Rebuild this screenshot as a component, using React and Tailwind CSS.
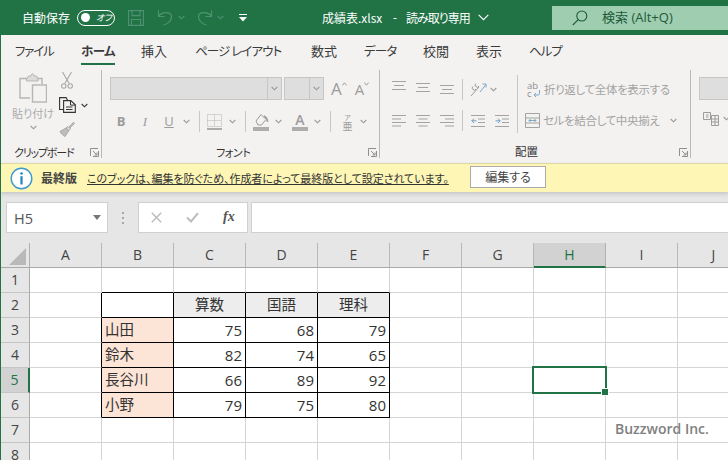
import React from "react";

const Chev = ({ className = "ml-0", color = "#9a9a9a" }) => (
  <svg width="7" height="5" viewBox="0 0 7 5" className={"shrink-0 " + className}>
    <path d="M.7 1 3.5 3.8 6.3 1" fill="none" stroke={color} strokeWidth="1.1" />
  </svg>
);

const Sep = ({ className }) => <div className={"w-px h-[21px] bg-[#c9c7c5] shrink-0 " + className} />;

const Launcher = () => (
  <svg width="9" height="9" viewBox="0 0 9 9" className="shrink-0">
    <path d="M.5 8V.5H8M8.5 3v5.5H3" fill="none" stroke="#8f8f8f" />
    <path d="M3 3 7 7M4.5 7H7V4.5" fill="none" stroke="#8f8f8f" />
  </svg>
);

const VAlign = ({ y, className }) => (
  <svg width="14" height="20" viewBox="0 0 14 20" className={"shrink-0 " + className}>
    {[0, 4, 8].map((d, i) => (
      <path key={i} d={`M${i === 1 ? 2 : 0} ${y + d + 0.5}H${i === 1 ? 12 : 14}`} stroke="#a3a3a3" fill="none" />
    ))}
  </svg>
);

const HAlign = ({ mode, className }) => {
  const rows = [14, 9, 14, 9];
  return (
    <svg width="14" height="14" viewBox="0 0 14 14" className={"shrink-0 " + className}>
      {rows.map((w, i) => {
        const x = mode === "l" ? 0 : mode === "c" ? (14 - w) / 2 : 14 - w;
        return <path key={i} d={`M${x} ${1.5 + i * 3.5}h${w}`} stroke="#a3a3a3" fill="none" />;
      })}
    </svg>
  );
};

const Indent = ({ dir, className }) => (
  <svg width="14" height="14" viewBox="0 0 14 14" className={"shrink-0 " + className}>
    <path d="M0 1.5h14M7 5h7M7 8.5h7M0 12.5h14" stroke="#a3a3a3" fill="none" />
    <path d={dir === "l" ? "M5.5 6.8H.8M3 4.6.8 6.8 3 9" : "M.5 6.8h4.7M3 4.6l2.2 2.2L3 9"} stroke="#6f9fc0" fill="none" />
  </svg>
);

const Paste = () => (
  <svg width="28" height="30" viewBox="0 0 28 30" fill="none">
    <path d="M1 5.5h7M18 5.5h5V11M1 5v20h10" stroke="#b5b5b5" strokeWidth="1.4" />
    <path d="M8 5.5 9.5 3h2.5c.3-3 2.7-3 3 0h2.5L19 6v2H7.5V6Z" fill="#dcdcdc" stroke="#b5b5b5" />
    <rect x="13.5" y="12" width="14" height="17" fill="#f3f2f1" stroke="#b5b5b5" strokeWidth="1.4" />
  </svg>
);

const Scissors = () => (
  <svg width="12" height="17" viewBox="0 0 12 17" fill="none" stroke="#a8a8a8" strokeWidth="1.1">
    <path d="M1.5 0 8.2 11.5M10.5 0 3.8 11.5" />
    <circle cx="2.8" cy="14" r="2.2" />
    <circle cx="9.2" cy="14" r="2.2" />
  </svg>
);

const Copy = () => (
  <svg width="17" height="16" viewBox="0 0 17 16" fill="none" stroke="#333" strokeWidth="1.1">
    <path d="M4 12.5H.6V.6h6.5L8.5 3" />
    <path d="M4.6 3.6h7.2l4.5 4.2v7.6H4.6Z" fill="#f3f2f1" />
    <path d="M11.5 3.6v4.5h4.8M7 10h6.5M7 12.5h6.5" strokeWidth="1" />
  </svg>
);

const Brush = () => (
  <svg width="16" height="16" viewBox="0 0 16 16" fill="none">
    <path d="M9 7 14.5 1.2l1 1L10 8" fill="#c4c4c4" stroke="#a8a8a8" />
    <path d="M9 5.5 11.5 8l-1.7 1.7L7 7Z" fill="#dcdcdc" stroke="#a8a8a8" />
    <path d="M7 7 1 10.5c1 2 3 4 5 5l3.8-5.8Z" fill="#bdbdbd" stroke="#a8a8a8" />
  </svg>
);

const Cell = ({ className = "", children }) => (
  <div
    className={
      "h-[25px] border-r border-b flex items-center text-[14.5px] leading-none px-[3px] " +
      className
    }
  >
    {children}
  </div>
);

const COLS = ["A", "B", "C", "D", "E", "F", "G", "H", "I", "J"];
const DATA = {
  2: ["", "算数", "国語", "理科"],
  3: ["山田", "75", "68", "79"],
  4: ["鈴木", "82", "74", "65"],
  5: ["長谷川", "66", "89", "92"],
  6: ["小野", "79", "75", "80"],
};

const black = "border-r-black border-b-black";

function SheetCell({ r, c }) {
  const t = DATA[r];
  const inTable = t && c >= 1 && c <= 4;
  if (inTable) {
    const v = t[c - 1];
    let cls = black + " text-[#333] [font-feature-settings:normal] ";
    if (r === 2) {
      cls += c === 1 ? "bg-white" : "bg-[#ededed] justify-center";
    } else if (c === 1) {
      cls += "bg-[#fce4d6]";
    } else {
      cls += "bg-white justify-end text-[15px]";
    }
    return <Cell className={cls}>{v}</Cell>;
  }
  const rightBlack = t && c === 0;
  const bottomBlack = r === 1 && c >= 1 && c <= 4;
  const cls =
    (rightBlack ? "border-r-black " : "border-r-[#d4d4d4] ") +
    (bottomBlack ? "border-b-black " : "border-b-[#d4d4d4] ") +
    "bg-white relative";
  return (
    <Cell className={cls}>
      {r === 5 && c === 7 && (
        <div className="absolute -left-[2px] -top-[2px] w-[75px] h-[28px] border-2 border-[#217346] z-10">
          <div className="absolute -right-[3px] -bottom-[3px] w-[6px] h-[6px] bg-[#217346] border border-white box-content -m-px" />
        </div>
      )}
    </Cell>
  );
}

export default function App() {
  return (
    <div className="relative w-[728px] h-[460px] overflow-hidden border-l border-[#217346] bg-[#f3f2f1] flex flex-col [font-feature-settings:'palt'] font-['Open_Sans','Noto_Sans_CJK_JP',sans-serif] text-[#333]">
      {/* Title bar */}
      <div className="h-[35px] shrink-0 bg-[#217346] flex items-center text-white text-[12px] -ml-px">
        <span className="ml-[22px] w-[48px] whitespace-nowrap font-['Noto_Sans_CJK_JP',sans-serif]">自動保存</span>
        <div className="ml-[7px] w-[38px] h-[16px] rounded-full border-[1.5px] border-white flex items-center">
          <div className="ml-[3px] w-[9px] h-[9px] rounded-full bg-white" />
          <span className="ml-[6px] text-[9px] italic leading-none">オフ</span>
        </div>
        <svg width="16" height="16" viewBox="0 0 16 16" fill="none" stroke="#4f9272" strokeWidth="1.1" className="ml-[13px]">
          <path d="M.6.6h14.8v14.8H.6ZM4 .6v5h8v-5M3.5 15.4V9.5h9v5.9" />
        </svg>
        <svg width="16" height="17" viewBox="0 0 16 17" fill="none" stroke="#4f9272" strokeWidth="1.2" className="ml-[13px]">
          <path d="M1.5 1.5v6h6M1.5 7.5C4.5 2.5 14.5 2 14.5 8c0 4-4 7-8 8" />
        </svg>
        <Chev className="ml-[5px]" color="#4f9272" />
        <svg width="16" height="17" viewBox="0 0 16 17" fill="none" stroke="#4f9272" strokeWidth="1.2" className="ml-[12px]">
          <path d="M14.5 1.5v6h-6M14.5 7.5C11.5 2.5 1.5 2 1.5 8c0 4 4 7 8 8" />
        </svg>
        <Chev className="ml-[4px]" color="#4f9272" />
        <svg width="8" height="8" viewBox="0 0 8 8" className="ml-[15px]">
          <path d="M0 .5h8" stroke="#fff" />
          <path d="M0 3h8L4 7.5Z" fill="#fff" />
        </svg>
        <span className="ml-[75px] w-[64px] whitespace-nowrap font-['Noto_Sans_CJK_JP',sans-serif] text-[12px]">成績表.xlsx</span>
        <span className="ml-[7px] w-[5px]">-</span>
        <span className="ml-[8px] w-[68px] whitespace-nowrap font-['Noto_Sans_CJK_JP',sans-serif] text-[12px] tracking-[-1px]">読み取り専用</span>
        <svg width="11" height="7" viewBox="0 0 11 7" fill="none" stroke="#fff" strokeWidth="1.2" className="ml-[4px]">
          <path d="M.7.8 5.5 5.6 10.3.8" />
        </svg>
        <div className="ml-auto mt-px w-[176px] h-[24px] bg-[#9fcdb0] flex items-center text-[#1c5a3a]">
          <svg width="16" height="16" viewBox="0 0 16 16" fill="none" stroke="#1c5a3a" strokeWidth="1.1" className="ml-[20px]">
            <circle cx="9.8" cy="6" r="5" />
            <path d="M6.2 9.6.8 15" />
          </svg>
          <span className="ml-[14px] text-[13px]">検索 (Alt+Q)</span>
        </div>
      </div>

      {/* Tabs */}
      <div className="h-[35px] shrink-0 flex items-center pb-[3px] text-[13px] text-[#3a3a3a] font-['Noto_Sans_CJK_JP',sans-serif]">
        <span className="ml-[14px] w-[38px] whitespace-nowrap text-[12.5px] tracking-[-1.2px]">ファイル</span>
        <div className="ml-[28px] relative font-bold w-[34px] whitespace-nowrap text-[12.5px] tracking-[-0.6px]">
          ホーム
          <div className="absolute left-0 right-0 -bottom-[5px] h-[2px] bg-[#217346]" />
        </div>
        <span className="ml-[26px] w-[27px]">挿入</span>
        <span className="ml-[27px] w-[87px] whitespace-nowrap text-[12.5px] tracking-[-0.9px]">ページ レイアウト</span>
        <span className="ml-[29px] w-[27px]">数式</span>
        <span className="ml-[26px] w-[33px] whitespace-nowrap text-[12.5px] tracking-[-0.8px]">データ</span>
        <span className="ml-[26px] w-[27px]">校閲</span>
        <span className="ml-[26px] w-[27px]">表示</span>
        <span className="ml-[26px] w-[33px] whitespace-nowrap text-[12.5px] tracking-[-1px]">ヘルプ</span>
      </div>

      {/* Ribbon */}
      <div className="h-[93px] shrink-0 flex pb-[5px] font-['Noto_Sans_CJK_JP',sans-serif]">
        {/* Clipboard */}
        <div className="w-[101px] shrink-0 border-r border-[#b9b9b9] flex flex-col">
          <div className="h-[76px] flex">
            <div className="ml-[10px] w-[44px] flex flex-col items-center pt-[3px]">
              <Paste />
              <span className="text-[11px] leading-[14px] mt-[3px] text-[#aaa] whitespace-nowrap">貼り付け</span>
              <Chev className="mt-[5px]" />
            </div>
            <div className="ml-[4px] flex flex-col pt-[2px]">
              <div className="ml-[2px]"><Scissors /></div>
              <div className="flex items-center mt-[8px]">
                <Copy />
                <Chev className="ml-[5px]" color="#333" />
              </div>
              <div className="mt-[8px]"><Brush /></div>
            </div>
          </div>
          <div className="flex-1 flex items-center">
            <span className="ml-[13px] text-[11px] text-[#333] whitespace-nowrap leading-none tracking-[-1.2px]">クリップボード</span>
            <div className="ml-auto mr-[2px]"><Launcher /></div>
          </div>
        </div>

        {/* Font */}
        <div className="w-[278px] shrink-0 border-r border-[#b9b9b9] flex flex-col">
          <div className="h-[76px]">
            <div className="mt-[7px] h-[23px] flex items-center">
              <div className="ml-[8px] w-[172px] h-[23px] bg-[#dedede] border border-[#c6c6c6] flex">
                <div className="ml-auto w-[14px] border-l border-[#c6c6c6] flex items-center justify-center"><Chev /></div>
              </div>
              <div className="ml-[2px] w-[40px] h-[23px] bg-[#dedede] border border-[#c6c6c6] flex">
                <div className="ml-auto w-[14px] border-l border-[#c6c6c6] flex items-center justify-center"><Chev /></div>
              </div>
              <div className="ml-[7px] flex items-start font-['Open_Sans',sans-serif] text-[#9c9c9c] leading-none">
                <span className="text-[17px]">A</span>
                <svg width="5" height="4" viewBox="0 0 5 4" className="mt-[2px]"><path d="M.3 3.5 2.5.8l2.2 2.7" fill="none" stroke="#9c9c9c" /></svg>
              </div>
              <div className="ml-[8px] flex items-start font-['Open_Sans',sans-serif] text-[#9c9c9c] leading-none">
                <span className="text-[15px] mt-[2px]">A</span>
                <svg width="5" height="4" viewBox="0 0 5 4" className="mt-[2px]"><path d="M.3.5 2.5 3.2 4.7.5" fill="none" stroke="#9c9c9c" /></svg>
              </div>
            </div>
            <div className="mt-[10px] h-[23px] flex items-center text-[#9c9c9c] font-['Open_Sans',sans-serif] leading-none">
              <span className="ml-[14px] w-[10px] text-[13px] font-bold text-center">B</span>
              <span className="ml-[15px] w-[8px] text-[13px] italic font-['Liberation_Serif',serif] text-center">I</span>
              <span className="ml-[15px] w-[10px] text-[13px] underline text-center">U</span>
              <Chev className="ml-[9px]" />
              <Sep className="ml-[9px]" />
              <svg width="15" height="16" viewBox="0 0 15 16" fill="none" className="ml-[7px] shrink-0">
                <path d="M.5.5h14v12H.5ZM7.5.5v12M.5 6.5h14" stroke="#b5b5b5" strokeDasharray="1 1" />
                <path d="M0 15h15" stroke="#8f8f8f" strokeWidth="1.4" />
              </svg>
              <Chev className="ml-[7px]" />
              <Sep className="ml-[9px]" />
              <svg width="16" height="18" viewBox="0 0 16 18" fill="none" className="ml-[7px] shrink-0">
                <path d="M3 8 8 1.5l5 5-4.5 5.5H5Z" stroke="#9c9c9c" fill="#f3f2f1" />
                <path d="M11 3c2 1 3.5 3 3.5 6" stroke="#9c9c9c" strokeWidth="1.6" />
                <rect y="14" width="16" height="4" fill="#adadad" />
              </svg>
              <Chev className="ml-[6px]" />
              <div className="ml-[10px] w-[16px] flex flex-col items-center shrink-0">
                <span className="text-[14px] leading-[13px] font-semibold">A</span>
                <div className="w-[16px] h-[4px] bg-[#adadad] mt-px" />
              </div>
              <Chev className="ml-[6px]" />
              <Sep className="ml-[9px]" />
              <div className="ml-[11px] w-[11px] flex items-center justify-center shrink-0 font-['Noto_Sans_CJK_JP',sans-serif] text-[10px] leading-[10px]">
                <ruby>亜<rt className="text-[7px] leading-[7px]">ア</rt></ruby>
              </div>
              <Chev className="ml-[7px]" />
            </div>
          </div>
          <div className="flex-1 flex items-center">
            <span className="ml-[114px] text-[11px] text-[#333] leading-none whitespace-nowrap tracking-[-0.4px]">フォント</span>
            <div className="ml-auto mr-[2px]"><Launcher /></div>
          </div>
        </div>

        {/* Alignment */}
        <div className="w-[311px] shrink-0 border-r border-[#b9b9b9] flex flex-col">
          <div className="h-[76px] flex">
            <div className="w-[138px] shrink-0 mt-[5px] h-[58px] border-r border-[#c9c7c5] flex flex-col">
              <div className="mt-[4px] h-[21px] flex items-center">
                <VAlign y={1} className="ml-[12px]" />
                <VAlign y={3} className="ml-[10px]" />
                <VAlign y={5} className="ml-[10px]" />
                <Sep className="ml-[8px]" />
                <svg width="17" height="17" viewBox="0 0 17 17" fill="none" stroke="#9c9c9c" className="ml-[7px] shrink-0">
                  <path d="M1 15 9 6M3 5.5a2 2 0 1 0 3 2.5M6 2.5a2 2 0 1 0 3 2.5" strokeWidth="1" />
                  <path d="M10 11 16 3.5M12.5 3H16v3.5" stroke="#7ea8c4" />
                </svg>
                <Chev className="ml-[3px]" />
              </div>
              <div className="mt-[10px] h-[21px] flex items-center">
                <HAlign mode="l" className="ml-[12px]" />
                <HAlign mode="c" className="ml-[10px]" />
                <HAlign mode="r" className="ml-[10px]" />
                <Sep className="ml-[8px]" />
                <Indent dir="l" className="ml-[8px]" />
                <Indent dir="r" className="ml-[10px]" />
              </div>
            </div>
            <div className="mt-[5px] h-[58px] flex flex-col text-[#a3a3a3]">
              <div className="mt-[4px] h-[21px] flex items-center">
                <div className="ml-[9px] w-[14px] font-['Open_Sans',sans-serif] text-[#8f8f8f] text-[9.5px] leading-[8px] whitespace-nowrap">
                  ab<br />c
                  <svg width="8" height="7" viewBox="0 0 8 7" fill="none" stroke="#7ea8c4" className="inline-block ml-px align-baseline"><path d="M6.5 0v3.5a1.5 1.5 0 0 1-1.5 1.5H1M3 3 1 5l2 2" /></svg>
                </div>
                <span className="ml-[3px] text-[11.5px] whitespace-nowrap tracking-[-0.35px]">折り返して全体を表示する</span>
              </div>
              <div className="mt-[10px] h-[21px] flex items-center">
                <svg width="15" height="15" viewBox="0 0 15 15" fill="none" stroke="#a3a3a3" className="ml-[7px] shrink-0">
                  <path d="M.5.5h14v14H.5ZM.5 5h14M.5 10h14" />
                  <path d="M4 7.5h7M5.5 6 4 7.5 5.5 9M9.5 6 11 7.5 9.5 9" stroke="#7ea8c4" />
                </svg>
                <span className="ml-[3px] w-[118px] text-[11.5px] whitespace-nowrap tracking-[-0.35px]">セルを結合して中央揃え</span>
                <Chev className="ml-[9px]" />
              </div>
            </div>
          </div>
          <div className="flex-1 flex items-center">
            <span className="ml-[135px] text-[11.5px] text-[#333] leading-none">配置</span>
            <div className="ml-auto mr-[2px]"><Launcher /></div>
          </div>
        </div>

        {/* Next group */}
        <div className="flex-1 flex flex-col">
          <div className="ml-[8px] mt-[7px] h-[23px] bg-[#dedede] border border-[#c6c6c6] border-r-0" />
          <div className="mt-[11px] flex items-center">
            <svg width="16" height="15" viewBox="0 0 16 15" fill="none" stroke="#9c9c9c" className="ml-[12px] shrink-0">
              <path d="M.5 1.5h7v7h-7ZM3 4h2.5M3 6h2.5M8.5 4.5h7v10h-7ZM8.5 8h7M8.5 11h7M12 4.5v10" />
            </svg>
            <Chev className="ml-[4px]" />
          </div>
        </div>
      </div>

      {/* Message bar */}
      <div className="h-[29px] shrink-0 relative z-20 bg-[#fdf6b5] border-t border-[#dcd8a8] shadow-[0_2px_4px_rgba(0,0,0,0.14)] flex items-center font-['Noto_Sans_CJK_JP',sans-serif] -mr-px">
        <svg width="23" height="23" viewBox="0 0 23 23" className="ml-[9px] shrink-0">
          <circle cx="11.5" cy="11.5" r="10.3" fill="#fff" stroke="#3f9ad0" strokeWidth="1.4" />
          <circle cx="11.5" cy="6.5" r="1.3" fill="#1f86c4" />
          <rect x="10.4" y="9.2" width="2.2" height="8.3" fill="#1f86c4" />
        </svg>
        <span className="ml-[8px] w-[37px] text-[12px] font-bold text-[#444] whitespace-nowrap">最終版</span>
        <span className="ml-[9px] w-[361px] text-[11px] underline text-[#333] whitespace-nowrap tracking-[-0.05px]">このブックは、編集を防ぐため、作成者によって最終版として設定されています。</span>
        <div className="ml-[22px] w-[76px] h-[22px] -mt-[3px] bg-white border border-[#ababab] flex items-center justify-center text-[12px] text-[#444]">編集する</div>
      </div>

      {/* Formula bar */}
      <div className="h-[51px] shrink-0 bg-[#e6e6e6] flex pt-[10px] -mr-px">
        <div className="ml-[5px] w-[102px] h-[31px] bg-white border border-[#d0d0d0] flex items-center">
          <span className="ml-[7px] mt-[3px] text-[14.5px] text-[#555] leading-none">H5</span>
          <svg width="8" height="5" viewBox="0 0 8 5" className="ml-auto mr-[6px]"><path d="M0 0h8L4 5Z" fill="#777" /></svg>
        </div>
        <div className="ml-[13px] w-[3px] h-[31px] flex flex-col items-center justify-center gap-[3px]">
          <div className="w-[2px] h-[2px] bg-[#a8a8a8]" />
          <div className="w-[2px] h-[2px] bg-[#a8a8a8]" />
          <div className="w-[2px] h-[2px] bg-[#a8a8a8]" />
        </div>
        <div className="ml-[14px] w-[110px] h-[31px] bg-white border border-[#d0d0d0] flex items-center">
          <svg width="11" height="11" viewBox="0 0 11 11" className="ml-[12px]" fill="none" stroke="#bdbdbd" strokeWidth="1.5"><path d="M.8.8l9.4 9.4M10.2.8.8 10.2" /></svg>
          <svg width="13" height="11" viewBox="0 0 13 11" className="ml-[24px]" fill="none" stroke="#bdbdbd" strokeWidth="2"><path d="M1 5.5 5 9.5 12 1.2" /></svg>
          <span className="ml-[24px] -mt-[2px] text-[14px] italic font-['Liberation_Serif',serif] font-bold text-[#555] leading-none">fx</span>
        </div>
        <div className="ml-[3px] flex-1 h-[31px] bg-white border border-[#d0d0d0]" />
      </div>

      {/* Sheet */}
      <div className="flex-1 overflow-hidden bg-white">
        <div className="grid grid-cols-[29px_repeat(10,72px)] w-[749px]">
          <div className="h-[25px] bg-[#e6e6e6] border-r border-b border-r-[#b0b0b0] border-b-[#a9a9a9] flex items-end justify-end pr-[3px] pb-[2px]">
            <svg width="17" height="17" viewBox="0 0 17 17"><path d="M17 0v17H0Z" fill="#b9b9b9" /></svg>
          </div>
          {COLS.map((c) =>
            c === "H" ? (
              <div key={c} className="h-[25px] bg-[#d2d2d2] border-b-2 border-r border-r-[#b0b0b0] border-b-[#217346] flex items-center justify-center text-[14px] text-[#217346] leading-none">{c}</div>
            ) : (
              <div key={c} className="h-[25px] bg-[#e6e6e6] border-r border-b border-r-[#b8b8b8] border-b-[#a9a9a9] flex items-center justify-center text-[14px] text-[#444] leading-none">{c}</div>
            )
          )}
          {[1, 2, 3, 4, 5, 6, 7, 8].map((r) => (
            <React.Fragment key={r}>
              {r === 5 ? (
                <div className="h-[25px] bg-[#d2d2d2] border-r-2 border-b border-r-[#217346] border-b-[#c4c4c4] flex items-center justify-center text-[14px] text-[#217346] leading-none">{r}</div>
              ) : (
                <div className="h-[25px] bg-[#e6e6e6] border-r border-b border-r-[#a9a9a9] border-b-[#c4c4c4] flex items-center justify-center text-[14px] text-[#444] leading-none">{r}</div>
              )}
              {COLS.map((c, i) => (
                <SheetCell key={c} r={r} c={i} />
              ))}
            </React.Fragment>
          ))}
        </div>
      </div>

      {/* Watermark */}
      <div className="absolute left-[614px] top-[420px] z-30 text-[14px] font-semibold leading-[17px] text-[#808080] whitespace-nowrap font-['Open_Sans',sans-serif]">Buzzword Inc.</div>
    </div>
  );
}
